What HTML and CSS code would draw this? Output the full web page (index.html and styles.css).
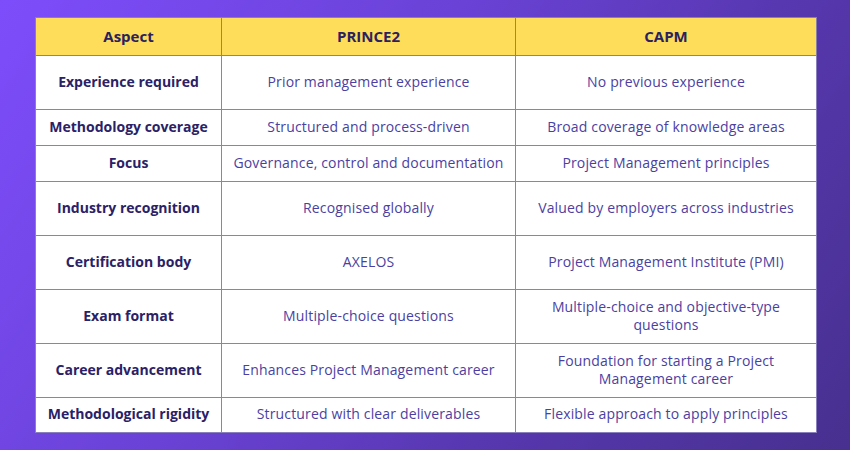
FILE: index.html
```html
<!DOCTYPE html>
<html lang="en">
<head>
<meta charset="utf-8">
<title>PRINCE2 vs CAPM</title>
<link rel="stylesheet" href="styles.css">
</head>
<body>
<main class="page">
  <table class="compare">
    <colgroup>
      <col class="c1"><col class="c2"><col class="c3">
    </colgroup>
    <thead>
      <tr class="head">
        <th>Aspect</th><th>PRINCE2</th><th>CAPM</th>
      </tr>
    </thead>
    <tbody>
      <tr class="tall"><th>Experience required</th><td>Prior management experience</td><td>No previous experience</td></tr>
      <tr class="short"><th>Methodology coverage</th><td>Structured and process-driven</td><td>Broad coverage of knowledge areas</td></tr>
      <tr class="short"><th>Focus</th><td>Governance, control and documentation</td><td>Project Management principles</td></tr>
      <tr class="tall"><th>Industry recognition</th><td>Recognised globally</td><td>Valued by employers across industries</td></tr>
      <tr class="tall"><th>Certification body</th><td>AXELOS</td><td>Project Management Institute (PMI)</td></tr>
      <tr class="tall"><th>Exam format</th><td>Multiple-choice questions</td><td>Multiple-choice and objective-type<br>questions</td></tr>
      <tr class="tall"><th>Career advancement</th><td>Enhances Project Management career</td><td>Foundation for starting a Project<br>Management career</td></tr>
      <tr class="last"><th>Methodological rigidity</th><td>Structured with clear deliverables</td><td>Flexible approach to apply principles</td></tr>
    </tbody>
  </table>
</main>
</body>
</html>
```
FILE: styles.css
```css
html, body {
  margin: 0;
  padding: 0;
}
body {
  width: 850px;
  height: 450px;
  overflow: hidden;
  background: linear-gradient(125deg, #7d4dfb 0%, #6a42d6 40%, #5637ad 70%, #47308f 100%);
  font-family: "Open Sans", "Liberation Sans", sans-serif;
}
.page {
  padding: 17px 0 0 35px;
}
.compare {
  border-collapse: collapse;
  width: 781px;
  table-layout: fixed;
  background: #ffffff;
  font-size: 14px;
  line-height: 18px;
}
.c1 { width: 186px; }
.c2 { width: 294px; }
.c3 { width: 301px; }
.compare th,
.compare td {
  border: 1px solid #8a80bd;
  text-align: center;
  vertical-align: middle;
  padding: 0 6px 2px;
}
.compare th {
  color: #2a2166;
  font-weight: 700;
}
.compare td {
  color: #4b3fa2;
  font-weight: 400;
  letter-spacing: 0.15px;
}
.head th {
  background: #fedd5a;
  height: 35px;
  font-size: 15px;
  color: #2b2160;
  border-color: #8a7fa6;
}
.tall th, .tall td { height: 51px; }
.short th, .short td { height: 33px; }
.last th, .last td { height: 32px; }
```
